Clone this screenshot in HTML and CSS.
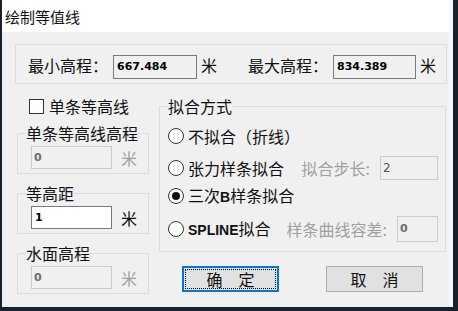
FILE: index.html
```html
<!DOCTYPE html>
<html lang="zh-CN">
<head>
<meta charset="UTF-8" />
<title>绘制等值线</title>
<link rel="stylesheet" href="styles.css">
</head>
<body>
<div class="window">
  <!-- 标题栏 -->
  <div class="titlebar">绘制等值线</div>

  <!-- 高程范围 -->
  <div class="range">
    <span class="txt">最小高程：</span>
    <span class="field ro w84">667.484</span>
    <span class="txt unit">米</span>
    <span class="txt gap-big">最大高程：</span>
    <span class="field ro w83">834.389</span>
    <span class="txt unit">米</span>
  </div>

  <div class="main">
    <!-- 左列 -->
    <div class="left">
      <div class="check">
        <span class="box"></span>
        <span class="check-label">单条等高线</span>
      </div>

      <fieldset class="grp">
        <legend>单条等高线高程</legend>
        <div class="row">
          <span class="field off">0</span>
          <span class="unit-l off-txt">米</span>
        </div>
      </fieldset>

      <fieldset class="grp">
        <legend>等高距</legend>
        <div class="row">
          <span class="field edit">1</span>
          <span class="unit-l">米</span>
        </div>
      </fieldset>

      <fieldset class="grp">
        <legend>水面高程</legend>
        <div class="row">
          <span class="field off">0</span>
          <span class="unit-l off-txt">米</span>
        </div>
      </fieldset>
    </div>

    <!-- 右列 -->
    <div class="right">
      <fieldset class="fit">
        <legend>拟合方式</legend>
        <div class="opt opt1">
          <span class="radio"></span>
          <span class="opt-label">不拟合（折线）</span>
        </div>
        <div class="opt opt2">
          <span class="radio"></span>
          <span class="opt-label">张力样条拟合</span>
          <span class="param">
            <span class="off-txt">拟合步长:</span>
            <span class="field off small w58">2</span>
          </span>
        </div>
        <div class="opt opt3">
          <span class="radio on"></span>
          <span class="opt-label">三次<b>B</b>样条拟合</span>
        </div>
        <div class="opt opt4">
          <span class="radio"></span>
          <span class="opt-label"><b>SPLINE</b>拟合</span>
          <span class="param">
            <span class="off-txt">样条曲线容差:</span>
            <span class="field off w41">0</span>
          </span>
        </div>
      </fieldset>

      <div class="buttons">
        <button class="btn focus">确　定</button>
        <button class="btn">取　消</button>
      </div>
    </div>
  </div>
</div>
</body>
</html>
```

FILE: styles.css
```css
/* === 基本样式 === */
* {
  box-sizing: border-box;
}
html {
  background-color: #17212f;
}
body {
  margin: 0;
  font-family: "Noto Sans CJK SC", "Noto Sans", sans-serif;
  font-size: 16px;
  line-height: 16px;
  color: #111;
}
.window {
  margin-left: 2px;
  width: 451px;
  height: 307px;
  background-color: #f0f0f0;
  border-right: 4px solid #f6f8fa;
}
.titlebar {
  height: 32px;
  background-color: #fff;
  font-size: 15px;
  line-height: 33px;
  padding-left: 3px;
}
/* === 高程范围 === */
.range {
  margin: 12px 0 0 13px;
  width: 432px;
  height: 40px;
  border: 1px solid #dcdcdc;
  display: flex;
  align-items: center;
  padding: 5px 0 0 12px;
}
.range .txt {
  margin-bottom: 4px;
}
.range .field {
  margin-left: 5px;
  height: 24px;
}
.range .unit {
  margin-left: 4px;
}
.range .gap-big {
  margin-left: 31px;
}
/* 输入框 */
.field {
  display: flex;
  align-items: center;
  height: 23px;
  width: 81px;
  padding-left: 3px;
  border: 1px solid #7a7a7a;
  background-color: #f0f0f0;
  font-family: "DejaVu Sans", sans-serif;
  font-weight: bold;
  font-size: 11px;
  color: #000;
}
.w84 { width: 84px; }
.w83 { width: 83px; }
.w58 { width: 58px; }
.w41 { width: 41px; }
.field.edit {
  background-color: #fff;
}
.field.off {
  border-color: #cccccc;
  color: #6d6d6d;
  padding-left: 2px;
}
.field.small {
  font-weight: normal;
  font-size: 12px;
  color: #555;
}
.off-txt {
  color: #a0a0a0;
}
/* === 主区域 === */
.main {
  display: flex;
  gap: 10px;
  margin-top: 14px;
  padding-left: 15px;
}
.left {
  width: 132px;
}
.right {
  width: 287px;
}
.check {
  display: flex;
  align-items: center;
  height: 16px;
  padding-left: 12px;
  margin-bottom: 11px;
}
.box {
  width: 15px;
  height: 15px;
  border: 1px solid #333;
  background-color: #fff;
}
.check-label {
  margin-left: 5px;
}
/* 分组框 */
fieldset {
  margin: 0;
  min-width: 0;
  border: 1px solid #dcdcdc;
}
legend {
  padding: 0;
  line-height: 16px;
}
.grp {
  padding: 0 0 4px 8px;
  margin-bottom: 11px;
}
.grp .row {
  display: flex;
  align-items: center;
  margin: 5px 0 0 5px;
}
.unit-l {
  margin-left: 9px;
}
/* 拟合方式 */
.fit {
  padding: 0 7px 9px 8px;
}
.opt {
  display: flex;
  align-items: center;
  height: 24px;
}
.opt1 { margin-top: 10px; }
.opt2 { margin-top: 8px; }
.opt3 { margin-top: 4px; }
.opt4 { margin-top: 8px; height: 26px; }
.opt4 .field { height: 26px; }
.opt2 .field { height: 24px; }
.radio {
  width: 16px;
  height: 16px;
  border: 1px solid #333;
  border-radius: 50%;
  background-color: #fff;
  display: flex;
  align-items: center;
  justify-content: center;
}
.radio.on::after {
  content: "";
  width: 8px;
  height: 8px;
  border-radius: 50%;
  background-color: #111;
}
.opt-label {
  margin-left: 4px;
}
.opt-label b {
  font-family: "Liberation Sans", sans-serif;
  font-size: 14px;
}
.param {
  margin-left: auto;
  display: flex;
  align-items: center;
  gap: 10px;
}
/* 按钮 */
.buttons {
  display: flex;
  gap: 47px;
  margin-top: 14px;
  padding-left: 23px;
}
.btn {
  width: 97px;
  height: 26px;
  font: inherit;
  font-size: 16px;
  color: #111;
  background-color: #e1e1e1;
  border: 1px solid #adadad;
  padding: 0;
}
.btn.focus {
  border: 2px solid #0078d7;
  outline: 1px dotted #000;
  outline-offset: -4px;
}
```
